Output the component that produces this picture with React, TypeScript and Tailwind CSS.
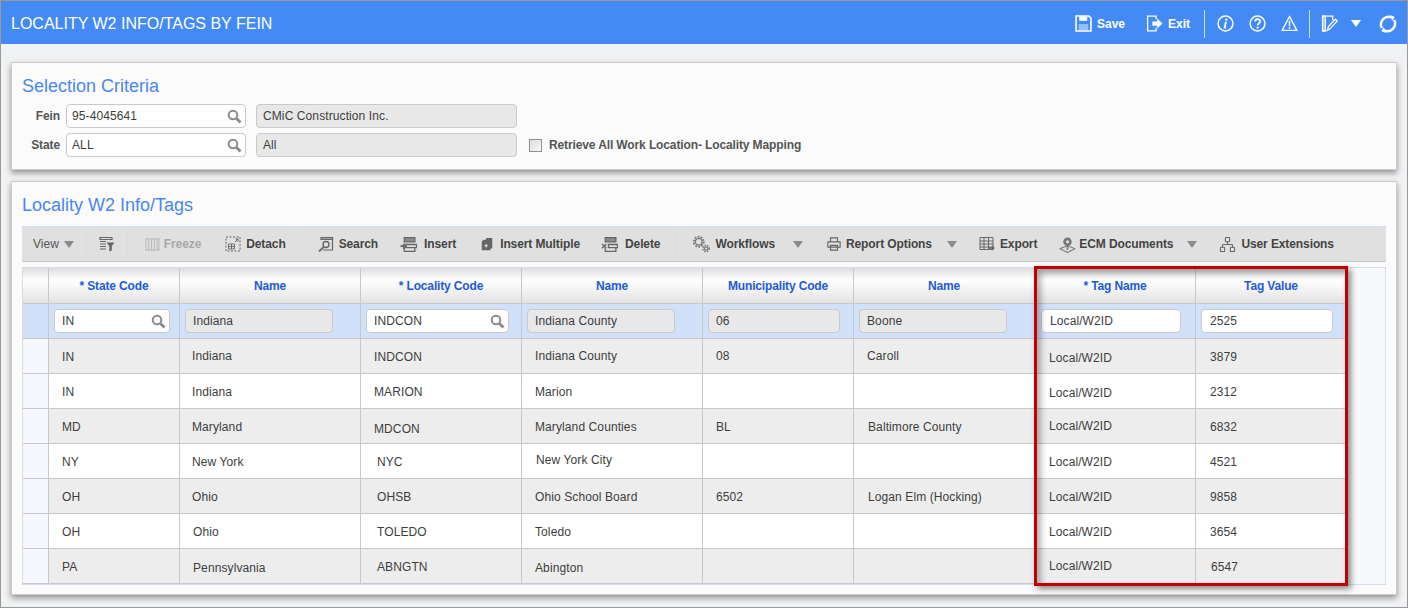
import { ReactNode } from "react";
import { Network } from "lucide-react";

type Cell = string | [string, string];

const rows: Cell[][] = [
  ["IN", ["Indiana", ""], "INDCON", ["Indiana County", ""], ["08", ""], ["Caroll", ""], ["Local/W2ID", "pt-[4px]"], "3879"],
  ["IN", "Indiana", "MARION", "Marion", "", "", ["Local/W2ID", "pt-[4px]"], "2312"],
  ["MD", "Maryland", ["MDCON", "pt-[6px]"], "Maryland Counties", "BL", ["Baltimore County", "pl-[14px] pt-[2px]"], ["Local/W2ID", ""], "6832"],
  ["NY", "New York", ["NYC", "pl-[16px] pt-[2px]"], ["New York City", "pb-[2px] pl-[14px]"], "", "", "Local/W2ID", "4521"],
  ["OH", "Ohio", ["OHSB", "pl-[16px] pt-[2px]"], "Ohio School Board", "6502", ["Logan Elm (Hocking)", "pl-[14px] pt-[2px]"], "Local/W2ID", "9858"],
  ["OH", ["Ohio", "pl-[13px] pt-[2px]"], ["TOLEDO", "pl-[16px] pt-[2px]"], "Toledo", "", "", "Local/W2ID", "3654"],
  ["PA", ["Pennsylvania", "pl-[13px] pt-[4px]"], ["ABNGTN", "pl-[16px] pt-[2px]"], ["Abington", "pt-[4px]"], "", "", ["Local/W2ID", ""], ["6547", "pl-[15px] pt-[2px]"]],
];

const headers = ["* State Code", "Name", "* Locality Code", "Name", "Municipality Code", "Name", "* Tag Name", "Tag Value"];
const cols = "grid w-fit grid-cols-[26px_131px_181px_161px_181px_151px_181px_161px_150px]";
const cellBorder = "border-r border-[#c8c8c8]";
// left padding of the data cells, per column
const cellPad = ["pl-[13px]", "pl-[12px]", "pl-[13px]", "pl-[13px]", "pl-[13px]", "pl-[13px]", "pl-[14px]", "pl-[14px]"];

function Ico({ children, className = "", size = 16 }: { children: ReactNode; className?: string; size?: number }) {
  return (
    <svg width={size} height={size} viewBox="0 0 16 16" fill="none" stroke="currentColor" strokeWidth="1.2" className={"shrink-0 " + className}>
      {children}
    </svg>
  );
}

function Caret({ className = "" }: { className?: string }) {
  return <div className={"h-0 w-0 border-x-[5px] border-t-[7px] border-x-transparent border-t-[#8a8a8a] " + className} />;
}

function Sep({ className = "" }: { className?: string }) {
  return <div className={"h-[28px] w-px bg-[#d5dde8] " + className} />;
}

function Lens() {
  return (
    <svg width="15" height="15" viewBox="0 0 15 15" fill="none" stroke="#8c8c8c" className="shrink-0">
      <circle cx="6" cy="6" r="4.300" strokeWidth="2" />
      <path d="M9.500 9.500L13.500 13.500" strokeWidth="3" />
    </svg>
  );
}

function Field({ value, lookup, grey, className = "" }: { value: string; lookup?: boolean; grey?: boolean; className?: string }) {
  return (
    <div className={"flex h-[24px] items-center justify-between rounded-[4px] border border-[#c9c9c9] pl-[5px] pr-[3px] text-[12px] tracking-[0.1px] text-[#3d3d3d] " + (grey ? "bg-[#e8e8e8] " : "bg-white ") + className}>
      <span className="whitespace-nowrap">{value}</span>
      {lookup && <Lens />}
    </div>
  );
}

function Tool({ icon, label, className = "", disabled }: { icon: ReactNode; label: string; className?: string; disabled?: boolean }) {
  return (
    <div className={"flex items-center whitespace-nowrap text-[12px] font-bold tracking-[-0.1px] " + (disabled ? "text-[#a9a9a9] " : "text-[#444] ") + className}>
      {icon}
      <span>{label}</span>
    </div>
  );
}

export default function App() {
  return (
    <div className="flex h-[608px] w-[1408px] flex-col overflow-hidden border border-[#9a9a9a] bg-[#f1f2f4] font-['Liberation_Sans',Arial,sans-serif]">
      <header className="flex h-[43px] shrink-0 items-center bg-[#448af5] pl-[10px] pt-[2px] text-white">
        <div className="text-[16px]">LOCALITY W2 INFO/TAGS BY FEIN</div>
        <div className="ml-auto flex items-center text-[12px] font-bold">
          <Ico size={17} className="mr-[5px]">
            <path d="M1 1h12l2 2v12H1z" strokeWidth="1.500" />
            <path d="M4 1.500h7.500v4H4z" fill="currentColor" stroke="none" />
            <path d="M3.500 8.500h9v6h-9z" fill="currentColor" fillOpacity=".45" stroke="none" />
          </Ico>
          <span>Save</span>
          <Ico size={17} className="ml-[21px] mr-[5px]">
            <path d="M9.500 4V1H1.500v14h8v-3" />
            <path d="M6 6h4.500V3.200L15.500 8l-5 4.800V10H6z" fill="currentColor" stroke="none" />
          </Ico>
          <span>Exit</span>
          <div className="ml-[14px] h-[28px] w-px bg-[#cfe0fb]" />
          <Ico size={17} className="ml-[12px]">
            <circle cx="8" cy="8" r="7" strokeWidth="1.400" />
            <circle cx="8.800" cy="4.300" r="1.100" fill="currentColor" stroke="none" />
            <path d="M8.400 6.500l-1.100 5.200h1.300" strokeWidth="1.800" />
          </Ico>
          <Ico size={17} className="ml-[15px]">
            <circle cx="8" cy="8" r="7" strokeWidth="1.400" />
            <path d="M5.700 6.200c0-3 4.800-3 4.800 0 0 1.800-2.400 1.800-2.400 3.500" strokeWidth="1.600" />
            <circle cx="8.100" cy="11.900" r="1" fill="currentColor" stroke="none" />
          </Ico>
          <Ico size={17} className="ml-[15px]">
            <path d="M8 1.500L15 14.500H1z" />
            <path d="M8 5.500v5M8 11.500v1.500" strokeWidth="1.400" />
          </Ico>
          <div className="ml-[11px] h-[28px] w-px bg-[#cfe0fb]" />
          <Ico size={17} className="ml-[11px]">
            <path d="M11 5V1H1.500v14H5" />
            <path d="M1.500 1h2.500v14H1.500z" fill="currentColor" fillOpacity=".3" />
            <path d="M6 14.500l1-3.500 6.500-7 1.700 1.700L8.500 13z" strokeWidth="1.200" />
          </Ico>
          <div className="ml-[13px] h-0 w-0 border-x-[5px] border-t-[7px] border-x-transparent border-t-white" />
          <Ico size={18} className="ml-[18px] mr-[10px]">
            <path d="M2.500 11.500A6.800 6.800 0 0 1 11.500 2.300" strokeWidth="2.200" />
            <path d="M13.500 4.500A6.800 6.800 0 0 1 4.500 13.700" strokeWidth="2.200" />
            <path d="M10 0l4 1.800-2.300 3.500zM6 16l-4-1.800 2.300-3.500z" fill="currentColor" stroke="none" />
          </Ico>
        </div>
      </header>

      <main className="flex flex-1 flex-col gap-[11px] px-[10px] pt-[18px]">
        <section className="h-[108px] border border-[#cccccc] bg-[#fbfbfb] pl-[10px] pt-[12px] shadow-[0_3px_6px_rgba(0,0,0,0.4)]">
          <h2 className="h-[22px] text-[18px] leading-[22px] text-[#4a86f0]">Selection Criteria</h2>
          <div className="mt-[7px] flex items-center">
            <label className="w-[38px] text-right text-[12px] font-bold tracking-[-0.1px] text-[#555]">Fein</label>
            <Field value="95-4045641" lookup className="ml-[6px] w-[180px]" />
            <Field value="CMiC Construction Inc." grey className="ml-[10px] w-[261px] pl-[6px]" />
          </div>
          <div className="mt-[5px] flex items-center">
            <label className="w-[38px] text-right text-[12px] font-bold tracking-[-0.1px] text-[#555]">State</label>
            <Field value="ALL" lookup className="ml-[6px] w-[180px]" />
            <Field value="All" grey className="ml-[10px] w-[261px] pl-[6px]" />
            <div className="ml-[12px] h-[13px] w-[13px] border border-[#8f8f8f] bg-[linear-gradient(135deg,#dcdcdc,#f8f8f8)]" />
            <span className="ml-[7px] text-[12px] font-bold tracking-[-0.12px] text-[#555]">Retrieve All Work Location- Locality Mapping</span>
          </div>
        </section>

        <section className="h-[414px] border border-[#cccccc] bg-[#fbfbfb] px-[10px] pt-[12px] shadow-[0_3px_6px_rgba(0,0,0,0.4)]">
          <h2 className="h-[22px] text-[18px] leading-[22px] text-[#4a86f0]">Locality W2 Info/Tags</h2>

          <div className="mt-[10px] flex h-[36px] items-center border-b border-t border-b-[#c8c8c8] border-t-[#cfe0f5] bg-[#e0e0e0] text-[#555]">
            <span className="ml-[11px] text-[12px]">View</span>
            <Caret className="ml-[5px]" />
            <Sep className="ml-[12px]" />
            <Ico className="ml-[12px] text-[#666]">
              <path d="M1 1.500h12v2H1zM1 5.500h6M1 8h6M1 10.500h6M1 13h6" />
              <path d="M7.500 6.500h8L12.800 10v4.500l-2.500 1V10z" fill="currentColor" stroke="none" />
            </Ico>
            <Sep className="ml-[12px]" />
            <Tool
              disabled
              label="Freeze"
              className="ml-[17px]"
              icon={
                <Ico size={15} className="mr-[4px] text-[#bdbdbd]">
                  <path d="M1 2h14v12H1zM4 2v12M7 2v12M10 2v12M13 2v12" />
                </Ico>
              }
            />
            <Tool
              label="Detach"
              className="ml-[24px]"
              icon={
                <Ico className="mr-[5px] text-[#666]">
                  <path d="M1 1h14v14H1z" strokeDasharray="2 1.500" strokeWidth="1" />
                  <path d="M3.500 8h6v5h-6zM3.500 10.500h6M6.500 8v5" strokeWidth=".9" />
                  <path d="M10 6l3-3M10.500 3H13v2.500" strokeWidth="1" />
                </Ico>
              }
            />
            <Sep className="ml-[15px]" />
            <Tool
              label="Search"
              className="ml-[16px]"
              icon={
                <Ico className="mr-[5px] text-[#666]">
                  <path d="M3 1.500h11.500v12.500H5" />
                  <path d="M3 1.500h11.500v2H3z" fill="currentColor" fillOpacity=".5" />
                  <circle cx="8" cy="8.500" r="3" strokeWidth="1.400" />
                  <path d="M5.800 10.800L1 15.500" strokeWidth="1.800" />
                </Ico>
              }
            />
            <Tool
              label="Insert"
              className="ml-[22px]"
              icon={
                <Ico size={17} className="mr-[7px] text-[#666]">
                  <path d="M4 1.500h10v4H4z" fill="currentColor" fillOpacity=".7" />
                  <path d="M5 8h10.500v3H5zM4 11v3.500h10V11" />
                  <path d="M.5 9.500h6M3.500 7v5" strokeWidth="1.600" />
                </Ico>
              }
            />
            <Tool
              label="Insert Multiple"
              className="ml-[24px]"
              icon={
                <Ico size={14} className="mr-[6px] text-[#666]">
                  <path d="M4 3h3V1h7v12h-2v2H2V5z" fill="currentColor" stroke="none" />
                  <path d="M7 8v4M5 10h4" stroke="#e0e0e0" />
                </Ico>
              }
            />
            <Tool
              label="Delete"
              className="ml-[21px]"
              icon={
                <Ico size={17} className="mr-[7px] text-[#666]">
                  <path d="M4 1.500h10v4H4z" fill="currentColor" fillOpacity=".7" />
                  <path d="M7 8h8.500v3H7zM4 11.500v3h10v-3" />
                  <path d="M1 7.500l4 4M5 7.500l-4 4" strokeWidth="1.300" />
                </Ico>
              }
            />
            <Sep className="ml-[15px]" />
            <Tool
              label="Workflows"
              className="ml-[16px]"
              icon={
                <Ico size={18} className="mr-[5px] text-[#777]">
                  <circle cx="6" cy="6" r="3" strokeWidth="1.200" />
                  <circle cx="6" cy="6" r="4.500" strokeWidth="1.500" strokeDasharray="1.600 1.200" />
                  <circle cx="12.500" cy="12" r="1.500" strokeWidth="1" />
                  <circle cx="12.500" cy="12" r="2.800" strokeWidth="1.300" strokeDasharray="1.300 1" />
                </Ico>
              }
            />
            <Caret className="ml-[18px]" />
            <Tool
              label="Report Options"
              className="ml-[24px]"
              icon={
                <Ico size={14} className="mr-[5px] text-[#666]">
                  <path d="M4 5V1h8v4M1 5.500h14v6H1zM4 9.500h8V15H4z" strokeWidth="1.300" />
                </Ico>
              }
            />
            <Caret className="ml-[15px]" />
            <Tool
              label="Export"
              className="ml-[22px]"
              icon={
                <Ico className="mr-[5px] text-[#666]">
                  <path d="M1 1.500h13v12H1zM1 5h13M1 8h13M1 11h13M5 2v11M9.500 2v11" strokeWidth="1" />
                  <path d="M10 12h5M13 10l2 2-2 2" strokeWidth="1.300" />
                </Ico>
              }
            />
            <Tool
              label="ECM Documents"
              className="ml-[22px]"
              icon={
                <Ico size={17} className="mr-[3px] text-[#777]">
                  <circle cx="8" cy="5.500" r="4" fill="currentColor" stroke="none" />
                  <circle cx="8" cy="5.500" r="1.500" fill="#e0e0e0" stroke="none" />
                  <path d="M8 9v4" strokeWidth="1.600" />
                  <path d="M1 12l7-3 7 3-7 3.500z" strokeWidth="1" />
                </Ico>
              }
            />
            <Caret className="ml-[14px]" />
            <Tool
              label="User Extensions"
              className="ml-[22px]"
              icon={<Network size={17} strokeWidth={1.500} className="mr-[5px] text-[#666]" />}
            />
          </div>

          <div className="relative mt-[5px] h-[318px] border border-[#d5dde8] bg-[#f8f9fb]">
            <div className={cols + " h-[36px] border-b border-[#c8c8c8] bg-[linear-gradient(#dedede,#ffffff_35%,#e2e2e2)]"}>
              <div className={cellBorder} />
              {headers.map((h, i) => (
                <div key={i} className={"flex items-center justify-center text-[12px] font-bold tracking-[-0.15px] text-[#1c5bd8] " + (i < 7 ? cellBorder : "")}>
                  {h}
                </div>
              ))}
            </div>

            <div className={cols + " h-[35px] border-b border-[#c8c8c8] bg-[#d1e1fa]"}>
              <div className={cellBorder} />
              <div className={"flex items-center pl-[5px] " + cellBorder}><Field value="IN" lookup className="w-[116px] pl-[7px]" /></div>
              <div className={"flex items-center pl-[5px] " + cellBorder}><Field value="Indiana" grey className="w-[148px] pl-[7px]" /></div>
              <div className={"flex items-center pl-[5px] " + cellBorder}><Field value="INDCON" lookup className="w-[143px] pl-[7px]" /></div>
              <div className={"flex items-center pl-[5px] " + cellBorder}><Field value="Indiana County" grey className="w-[148px] pl-[7px]" /></div>
              <div className={"flex items-center pl-[5px] " + cellBorder}><Field value="06" grey className="w-[132px] pl-[7px]" /></div>
              <div className={"flex items-center pl-[5px] " + cellBorder}><Field value="Boone" grey className="w-[148px] pl-[7px]" /></div>
              <div className={"flex items-center pl-[6px] " + cellBorder}><Field value="Local/W2ID" className="w-[140px] pl-[8px]" /></div>
              <div className="flex items-center pl-[5px]"><Field value="2525" className="w-[132px] pl-[8px]" /></div>
            </div>

            {rows.map((row, r) => (
              <div key={r} className={cols + " h-[35px] border-b border-[#c8c8c8] " + (r % 2 === 0 ? "bg-[#ededed]" : "bg-white")}>
                <div className={"bg-[#f5f7fc] " + cellBorder} />
                {row.map((cell, i) => {
                  const text = typeof cell === "string" ? cell : cell[0];
                  const extra = typeof cell === "string" ? "pt-[2px]" : cell[1];
                  return (
                    <div key={i} className={"flex items-center whitespace-nowrap text-[12px] tracking-[0.1px] text-[#3d3d3d] " + cellPad[i] + " " + (i < 7 ? cellBorder + " " : "") + extra}>
                      {text}
                    </div>
                  );
                })}
              </div>
            ))}

            <div className="pointer-events-none absolute left-[1011px] top-[-2px] h-[320px] w-[314px] border-[3px] border-[#c00000] shadow-[3px_3px_6px_rgba(0,0,0,0.45),inset_4px_4px_6px_rgba(0,0,0,0.3)]" />
          </div>
        </section>
      </main>
    </div>
  );
}
